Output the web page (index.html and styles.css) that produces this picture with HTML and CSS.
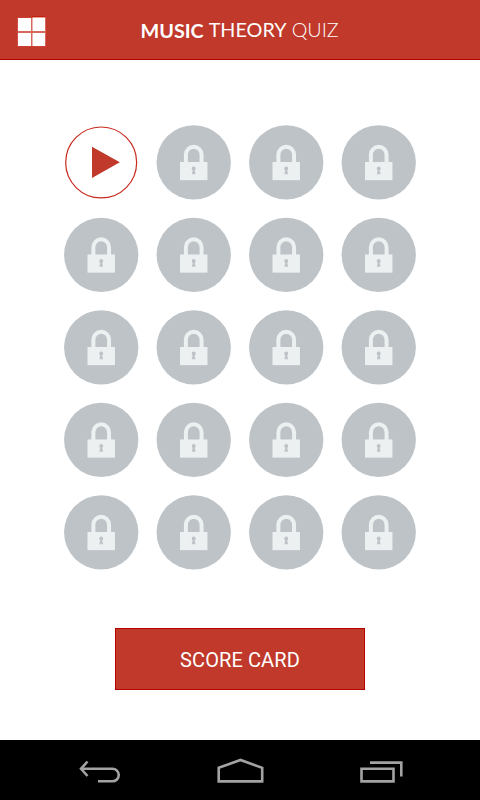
FILE: index.html
```html
<!DOCTYPE html>
<html lang="en">
<head>
<meta charset="utf-8">
<title>Music Theory Quiz</title>
<link rel="stylesheet" href="styles.css">
</head>
<body>
<header class="topbar">
  <svg class="menu" width="30" height="33" viewBox="0 0 30 33">
    <path class="menu-shade" d="M1 2H15V1H28V32H1z"/>
    <path class="menu-gap" d="M.5 2.500H29V31.500H.5z"/>
    <path class="menu-tile" d="M1 3H14V16H1zM15.500 2.500H28V16H15.500zM1 18H14V31H1zM15.500 18H28V31H15.500z"/>
  </svg>
  <h1 class="title"><span class="bold">MUSIC</span><span class="regular">THEORY</span><span class="light">QUIZ</span></h1>
</header>
<main class="content">
  <div class="levels" id="levels">
    <svg class="level" viewBox="0 0 92.5 92.5">
      <circle class="ring" cx="46.200" cy="46.500" r="35.500"/>
      <path class="play" d="M37 30.800L64.900 46.400L37 62.100z"/>
    </svg>
  </div>
  <button class="score">SCORE CARD</button>
</main>
<nav class="navbar">
  <svg width="44" height="28" viewBox="0 0 44 28"><path d="M3 12.800H34.500A6.250 6.250 0 0 1 34.500 25.300H20"/><path d="M9.500 5.500L3 12.800L9.500 20"/></svg>
  <svg width="48" height="28" viewBox="0 0 48 28"><path d="M1.700 11.800L23.500 4L45.200 11.800V25.400H1.700z"/></svg>
  <svg width="44" height="28" viewBox="0 0 44 28"><path d="M1.500 12.700H33.500V25.400H1.500zM10 6.600H41.300V20.500"/></svg>
</nav>
<template id="lock">
  <svg class="level" viewBox="0 0 92.5 92.5">
    <g class="locked">
      <circle class="disc" cx="46.250" cy="46.400" r="37.200"/>
      <path class="shackle" d="M38.400 47V38.700A7.850 7.850 0 0 1 54.100 38.700V47"/>
      <path class="lock-body" d="M32.500 46H60V64.200H32.500z"/>
      <circle class="disc" cx="46.250" cy="52.500" r="2"/>
      <path class="disc" d="M45.500 53H47L48.100 58.200H44.400z"/>
    </g>
  </svg>
</template>
<script src="script.js"></script>
</body>
</html>
```
FILE: styles.css
```css
* { box-sizing: border-box; }
body {
  margin: 0;
  height: 800px;
  display: flex;
  flex-direction: column;
  background: #fff;
  font-family: Roboto, "Liberation Sans", sans-serif;
  overflow: hidden;
}
.topbar {
  flex: 0 0 60px;
  display: flex;
  align-items: flex-start;
  padding-left: 17px;
  background: #c0392b;
  border-bottom: 1px solid #b30000;
}
.menu { margin-top: 15px; }
.menu-shade { fill: #c41e0b; }
.menu-gap { fill: #d8675c; }
.menu-tile { fill: #fff; }
.title {
  display: flex;
  gap: 5px;
  margin: 18px 0 0 93.5px;
  font: 400 19.8px/23px Lato, sans-serif;
  color: #fff;
}
.bold { font-weight: 700; padding-top: 1px; }
.light { font-weight: 300; }
.content {
  flex: 1;
  display: flex;
  flex-direction: column;
  align-items: center;
  padding-top: 56px;
}
.levels {
  display: grid;
  grid-template-columns: repeat(4, 92.45px);
  grid-auto-rows: 92.45px;
  width: 370px;
}
.level { display: block; width: 92.45px; height: 92.45px; }
/* Half-pixel correction for cells that start between device pixels */
.level { --dx: 0px; --dy: 0px; }
.level:nth-child(even) { --dx: 0.5px; }
.level:nth-child(8n+5), .level:nth-child(8n+6),
.level:nth-child(8n+7), .level:nth-child(8n+8) { --dy: 0.5px; }
.locked { transform: translate(var(--dx), var(--dy)); }
.ring { fill: #fff; stroke: #c82a1e; stroke-width: 1.2; }
.play { fill: #c0392b; }
.disc { fill: #bdc3c7; }
.shackle { fill: none; stroke: #ecf0f1; stroke-width: 4; }
.lock-body { fill: #ecf0f1; }
.score {
  width: 250px;
  height: 62px;
  margin-top: 49.75px;
  padding: 2px 0 0;
  border: 1px solid #b80000;
  background: #c0392b;
  color: #fff;
  font: 400 20px/24px Roboto, sans-serif;
  letter-spacing: 0.1px;
}
.navbar {
  flex: 0 0 60px;
  display: flex;
  justify-content: space-between;
  padding: 16px 76px 0 78px;
  background: #000;
}
.navbar path { fill: none; stroke: #a3a3a3; stroke-width: 2.6; }
```
FILE: script.js
```js
const levels = document.getElementById("levels");
const lock = document.getElementById("lock");
for (let i = 1; i < 20; i++) {
  levels.appendChild(lock.content.cloneNode(true));
}
```
